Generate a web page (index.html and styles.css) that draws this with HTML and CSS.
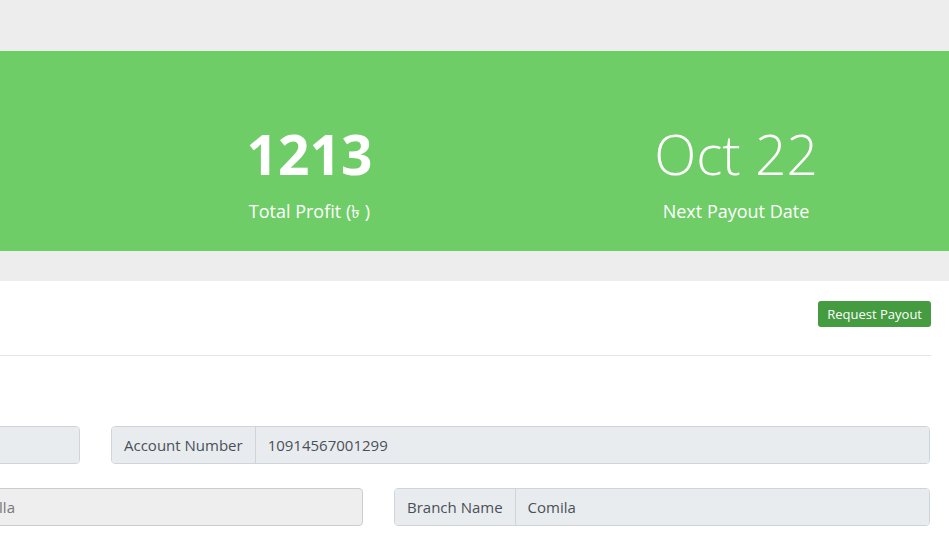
FILE: index.html
```html
<!DOCTYPE html>
<html lang="en">
<head>
<meta charset="utf-8">
<title>Payout</title>
<link rel="stylesheet" href="styles.css">
</head>
<body>
<div class="page">
  <div class="top-space"></div>
  <section class="banner">
    <div class="stat"><div class="stat-value">52</div><div class="stat-label">Total Sales</div></div>
    <div class="stat"><div class="stat-value bold">1213</div><div class="stat-label">Total Profit (৳ )</div></div>
    <div class="stat"><div class="stat-value">Oct 22</div><div class="stat-label">Next Payout Date</div></div>
  </section>
  <div class="strip"></div>
  <section class="panel">
    <div class="panel-head">
      <button class="btn">Request Payout</button>
    </div>
    <hr class="divider">
    <div class="form-row wide">
      <div class="group"><span class="addon">Account Name</span><span class="value">Rahim Uddin</span></div>
      <div class="group"><span class="addon">Account Number</span><span class="value">10914567001299</span></div>
    </div>
    <div class="form-row third">
      <div class="group"><span class="addon">Bank Name</span><span class="value">Sonali Bank</span></div>
      <div class="plain">Kandirpar Road, Comilla</div>
      <div class="group"><span class="addon">Branch Name</span><span class="value">Comila</span></div>
    </div>
  </section>
</div>
</body>
</html>
```

FILE: styles.css
```css
html, body {
  margin: 0;
  padding: 0;
}
body {
  background: #ededed;
  font-family: "Open Sans", "Noto Sans", sans-serif;
  overflow: hidden;
  width: 949px;
  height: 545px;
}
.page {
  width: 949px;
}
.top-space {
  height: 51px;
}
.banner {
  height: 200px;
  background: #6fcd67;
  color: #fff;
  display: grid;
  grid-template-columns: 1fr 427px 426px;
}
.stat {
  display: flex;
  flex-direction: column;
  align-items: center;
  padding-top: 75px;
  min-width: 0;
  overflow: hidden;
}
.stat:first-child {
  visibility: hidden;
}
.stat-value {
  font-size: 55px;
  line-height: 55px;
  font-weight: 300;
}
.stat-value.bold {
  font-weight: 700;
}
.stat-label {
  margin-top: 18px;
  font-size: 18px;
  line-height: 24px;
}
.strip {
  height: 30px;
}
.panel {
  background: #fff;
  height: 264px;
  padding: 20px 18px 0 0;
}
.panel-head {
  display: flex;
  justify-content: flex-end;
}
.btn {
  height: 26px;
  padding: 0 9px;
  background: #449b40;
  color: #fff;
  border: none;
  border-radius: 3px;
  font-family: inherit;
  font-size: 13px;
}
.divider {
  margin: 28px 0 0;
  border: 0;
  border-top: 1px solid #e5e5e5;
}
.form-row {
  display: flex;
  justify-content: flex-end;
  gap: 31px;
  margin-right: 1px;
}
.form-row.wide {
  margin-top: 70px;
}
.form-row.third {
  margin-top: 24px;
}
.wide > * {
  flex: 0 0 819px;
}
.third > * {
  flex: 0 0 536px;
}
.group, .plain {
  box-sizing: border-box;
  height: 38px;
  display: flex;
  border: 1px solid #ced4da;
  border-radius: 4px;
  overflow: hidden;
  font-size: 15px;
  color: #495057;
}
.addon, .value {
  display: flex;
  align-items: center;
  padding: 0 12px;
  background: #e9ecef;
}
.addon {
  border-right: 1px solid #ced4da;
}
.value {
  flex: 1;
}
.plain {
  align-items: center;
  padding: 0 12px 0 18px;
  background: #eeeeee;
  border-color: #cccccc;
  color: #777;
  white-space: nowrap;
}
```
